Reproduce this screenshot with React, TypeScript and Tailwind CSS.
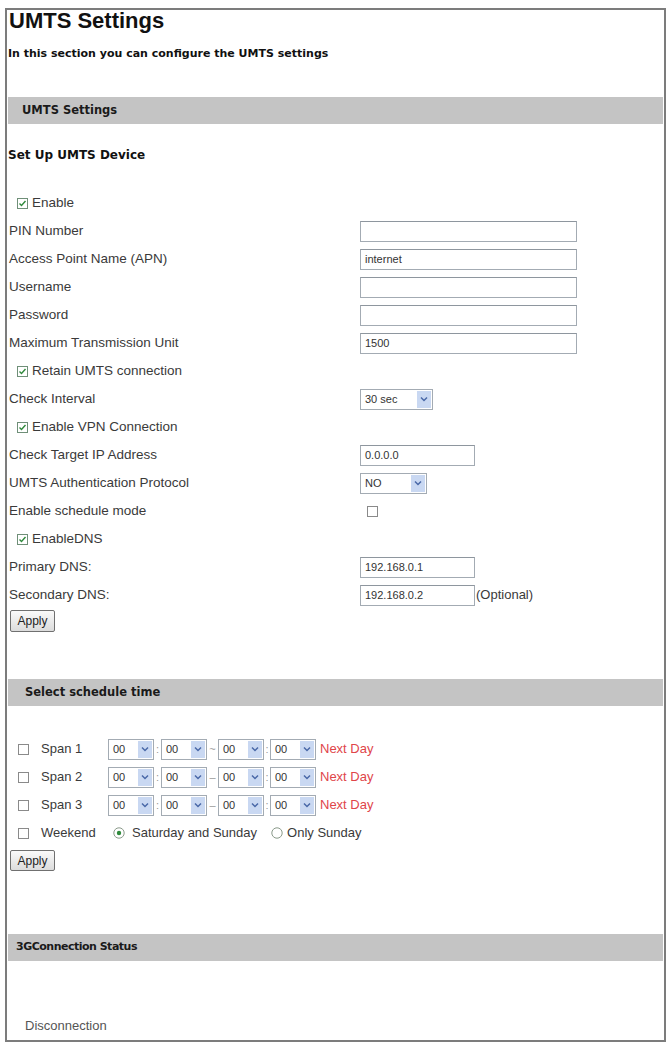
import type { ReactNode } from "react";

const sans = "font-['Liberation_Sans',Arial,sans-serif]";
const bold = "font-['DejaVu_Sans',Verdana,sans-serif] font-bold";

function Check({ on = false }: { on?: boolean }) {
  return (
    <svg width="11" height="11" viewBox="0 0 11 11" className="shrink-0">
      <rect x="0.5" y="0.5" width="10" height="10" fill="#fff" stroke={on ? "#6f8f78" : "#8a8a8a"} />
      {on ? <path d="M2.5 5.5 L4.5 7.5 L8.5 3" fill="none" stroke="#2f8a3c" strokeWidth="1.4" /> : null}
    </svg>
  );
}

function Radio({ on = false }: { on?: boolean }) {
  return (
    <svg width="12" height="12" viewBox="0 0 12 12" className="shrink-0">
      <circle cx="6" cy="6" r="5.2" fill="#fff" stroke="#8a9a8a" />
      {on ? <circle cx="6" cy="6" r="2.2" fill="#2f8a3c" /> : null}
    </svg>
  );
}

function TextBox({ value = "", w }: { value?: string; w: string }) {
  return (
    <div
      className={`${w} flex h-[21px] items-center border border-[#a3abb3] border-t-[#8e969e] bg-white pl-[4px] ${sans} text-[11px] text-[#333]`}
    >
      {value}
    </div>
  );
}

function Drop({ value, w }: { value: string; w: string }) {
  return (
    <div className={`${w} flex h-[21px] items-stretch border border-[#a3abb3] bg-white`}>
      <span className={`flex flex-1 items-center pl-[4px] ${sans} text-[11px] text-[#333]`}>{value}</span>
      <span className="m-[1px] flex w-[14px] items-center justify-center bg-[#c9d8f2]">
        <svg width="8" height="6" viewBox="0 0 8 6">
          <path d="M1 1.5 L4 4.5 L7 1.5" fill="none" stroke="#4a68a8" strokeWidth="1.5" />
        </svg>
      </span>
    </div>
  );
}

function Bar({ children, pad, size = "text-[11.5px]" }: { children: ReactNode; pad: string; size?: string }) {
  return (
    <div className={`flex h-[27px] items-center bg-[#c4c4c4] ${pad} ${bold} ${size} text-[#1a1a1a]`}>
      {children}
    </div>
  );
}

function Row({ label, children }: { label: ReactNode; children?: ReactNode }) {
  return (
    <div className="grid h-[28px] grid-cols-[351px_1fr] items-center pl-[1px]">
      <div className={`${sans} text-[13.5px] text-[#3a3a3a]`}>{label}</div>
      <div className="flex items-center">{children}</div>
    </div>
  );
}

function CheckRow({ label }: { label: string }) {
  return (
    <div className={`flex h-[28px] items-center gap-[4px] pl-[9px] ${sans} text-[13.5px] text-[#3a3a3a]`}>
      <Check on />
      {label}
    </div>
  );
}

function ApplyButton({ h }: { h: string }) {
  return (
    <div className="pl-[2px]">
      <button
        type="button"
        className={`block ${h} w-[45px] rounded-[2px] border border-[#707070] bg-gradient-to-b from-[#fafafa] to-[#dcdcdc] ${sans} text-[12px] text-[#222]`}
      >
        Apply
      </button>
    </div>
  );
}

function Sep({ ch, w }: { ch: string; w: string }) {
  return <span className={`${w} text-center ${sans} text-[11px] text-[#999]`}>{ch}</span>;
}

function SpanRow({ name, mid }: { name: string; mid: string }) {
  return (
    <div className={`flex h-[28px] items-center pl-[10px] ${sans} text-[13px] text-[#3a3a3a]`}>
      <Check />
      <span className="ml-[12px] w-[67px]">{name}</span>
      <Drop value="00" w="w-[46px]" />
      <Sep ch=":" w="w-[7px]" />
      <Drop value="00" w="w-[46px]" />
      <Sep ch={mid} w="w-[11px]" />
      <Drop value="00" w="w-[46px]" />
      <Sep ch=":" w="w-[6px]" />
      <Drop value="00" w="w-[46px]" />
      <span className="ml-[4px] text-[#e0454a]">Next Day</span>
    </div>
  );
}

export default function App() {
  return (
    <div className="min-h-screen bg-white pl-[5px] pt-[8px]">
      <div className="h-[1034px] w-[661px] overflow-hidden border-2 border-[#7c7c7c] px-px">
        <h1 className={`pl-[1px] ${sans} text-[22px] font-bold leading-[22px] text-[#111]`}>UMTS Settings</h1>
        <p className={`mt-[15px] ${bold} text-[11px] leading-[14px] text-[#111]`}>
          In this section you can configure the UMTS settings
        </p>

        <div className="mt-[36px]">
          <Bar pad="pl-[14px]">UMTS Settings</Bar>
        </div>
        <p className={`mt-[24px] ${bold} text-[12px] leading-[14px] text-[#111]`}>Set Up UMTS Device</p>

        <div className="mt-[27px]">
          <CheckRow label="Enable" />
          <Row label="PIN Number">
            <TextBox w="w-[217px]" />
          </Row>
          <Row label="Access Point Name (APN)">
            <TextBox w="w-[217px]" value="internet" />
          </Row>
          <Row label="Username">
            <TextBox w="w-[217px]" />
          </Row>
          <Row label="Password">
            <TextBox w="w-[217px]" />
          </Row>
          <Row label="Maximum Transmission Unit">
            <TextBox w="w-[217px]" value="1500" />
          </Row>
          <CheckRow label="Retain UMTS connection" />
          <Row label="Check Interval">
            <Drop w="w-[73px]" value="30 sec" />
          </Row>
          <CheckRow label="Enable VPN Connection" />
          <Row label="Check Target IP Address">
            <TextBox w="w-[115px]" value="0.0.0.0" />
          </Row>
          <Row label="UMTS Authentication Protocol">
            <Drop w="w-[67px]" value="NO" />
          </Row>
          <Row label="Enable schedule mode">
            <span className="ml-[7px]">
              <Check />
            </span>
          </Row>
          <CheckRow label="EnableDNS" />
          <Row label="Primary DNS:">
            <TextBox w="w-[115px]" value="192.168.0.1" />
          </Row>
          <Row label="Secondary DNS:">
            <TextBox w="w-[115px]" value="192.168.0.2" />
            <span className={`ml-[1px] ${sans} text-[13px] text-[#3a3a3a]`}>(Optional)</span>
          </Row>
        </div>
        <div className="mt-[1px]">
          <ApplyButton h="h-[22px]" />
        </div>

        <div className="mt-[47px]">
          <Bar pad="pl-[17px]">Select schedule time</Bar>
        </div>
        <div className="mt-[29px]">
          <SpanRow name="Span 1" mid="~" />
          <SpanRow name="Span 2" mid="–" />
          <SpanRow name="Span 3" mid="–" />
          <div className={`flex h-[28px] items-center pl-[10px] ${sans} text-[13px] text-[#3a3a3a]`}>
            <Check />
            <span className="ml-[12px] w-[72px]">Weekend</span>
            <Radio on />
            <span className="ml-[7px]">Saturday and Sunday</span>
            <span className="ml-[14px]">
              <Radio />
            </span>
            <span className="ml-[4px]">Only Sunday</span>
          </div>
        </div>
        <div className="mt-[3px]">
          <ApplyButton h="h-[21px]" />
        </div>

        <div className="mt-[63px]">
          <Bar pad="pl-[8px]" size="text-[11px] tracking-[-0.5px]">3GConnection Status</Bar>
        </div>
        <p className={`mt-[57px] pl-[17px] ${sans} text-[13px] leading-[16px] text-[#555]`}>Disconnection</p>
      </div>
    </div>
  );
}
